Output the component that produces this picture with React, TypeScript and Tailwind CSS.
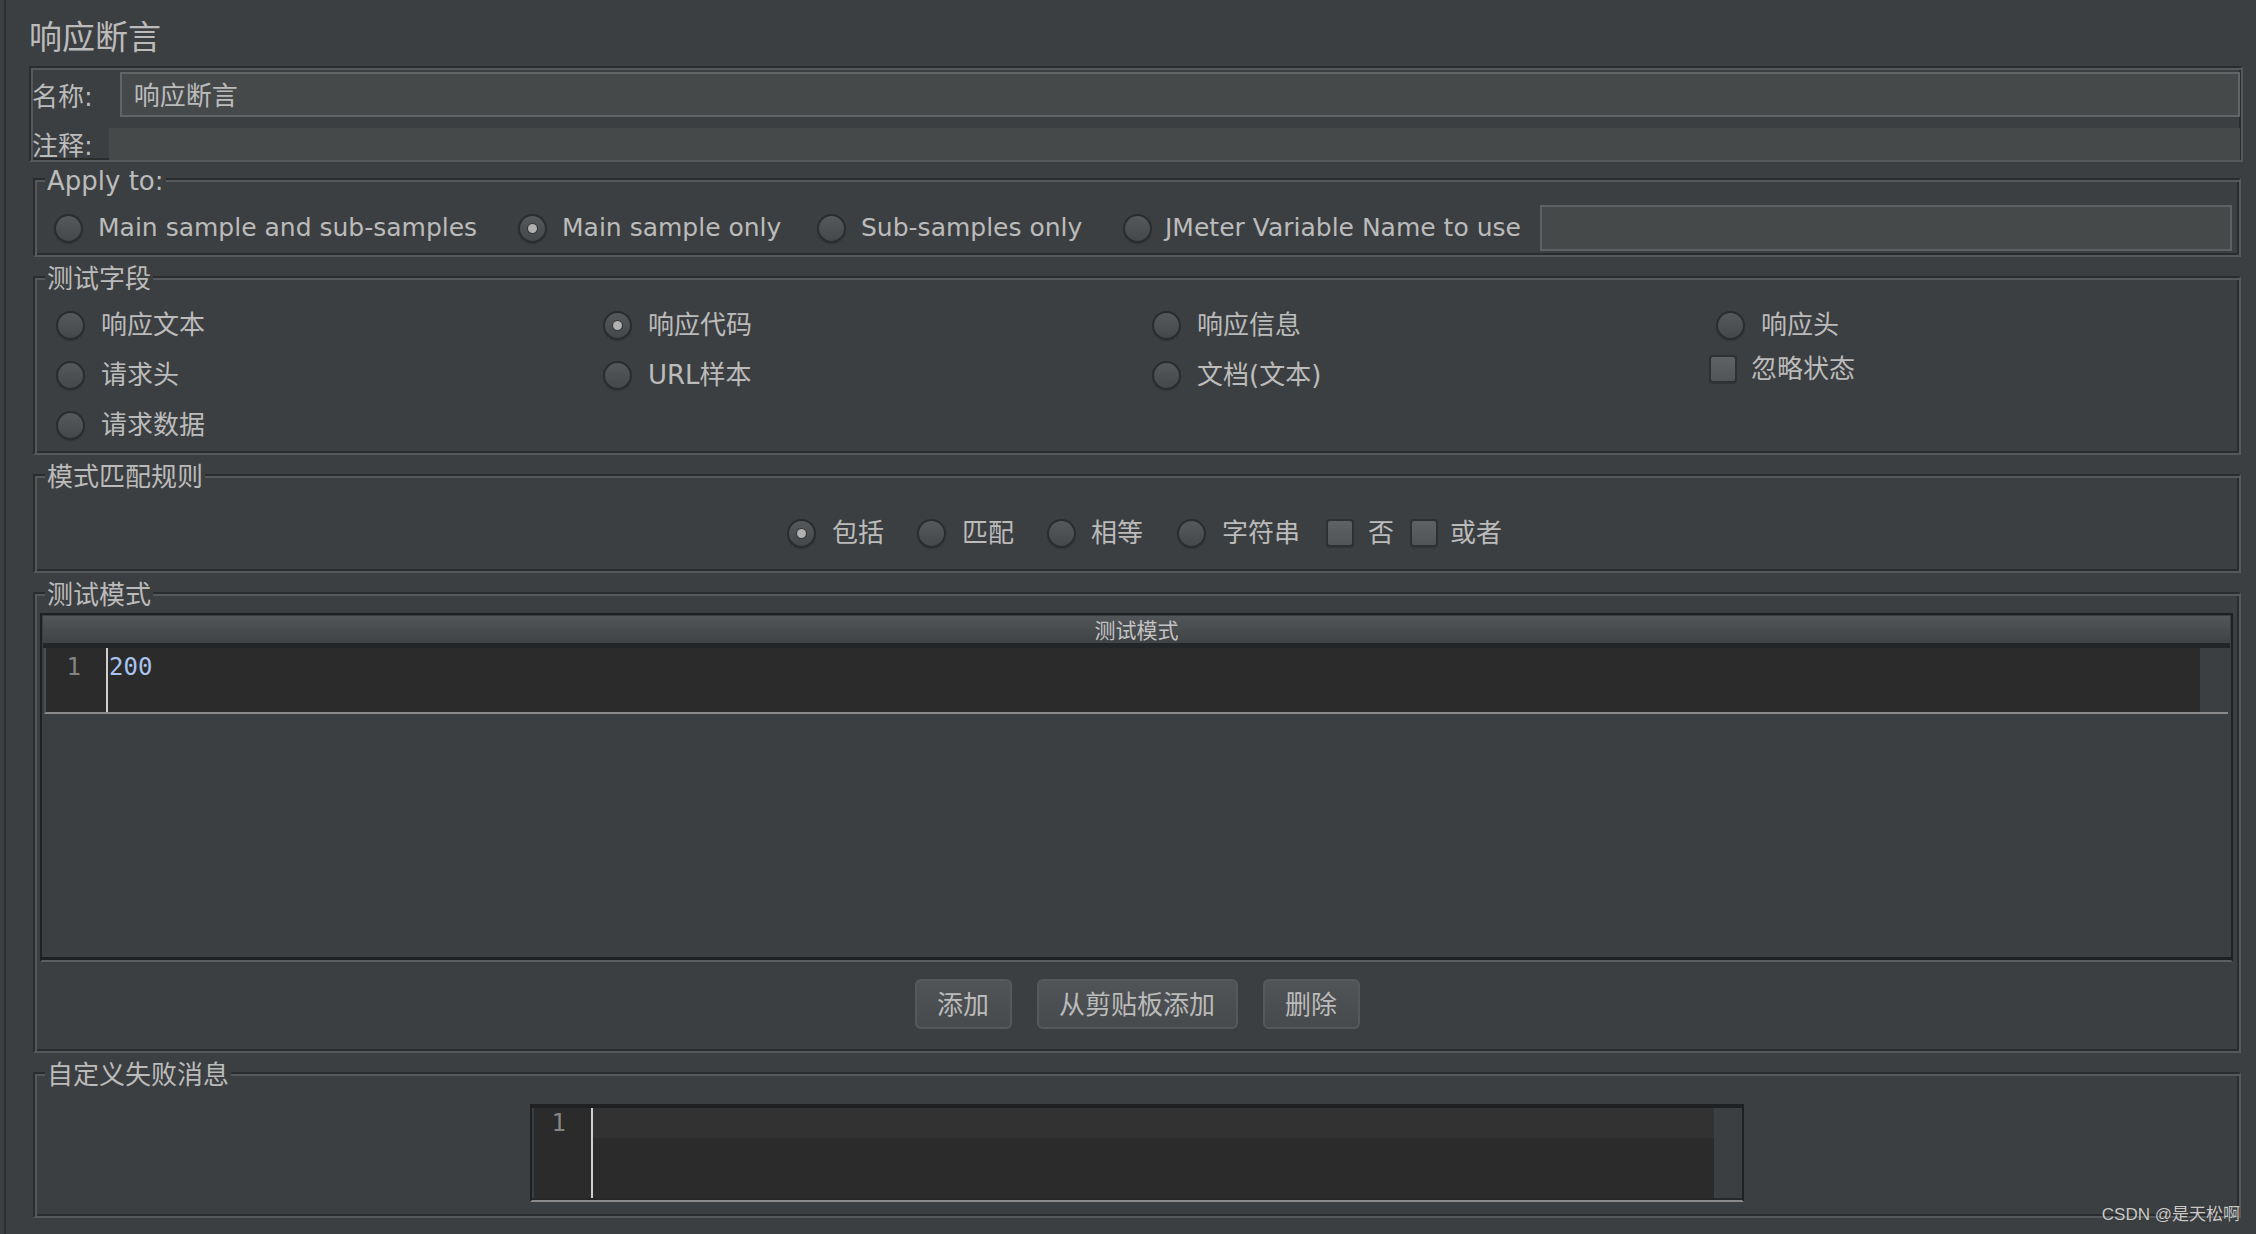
import { ReactNode } from 'react';

const etched =
  'border-2 border-t-[#2a2c2e] border-l-[#2a2c2e] border-r-[#55595b] border-b-[#55595b] shadow-[inset_2px_2px_0_#55595b,inset_-2px_-2px_0_#2a2c2e]';

const Radio = ({ checked }: { checked?: boolean }) => (
  <span className="flex h-[29px] w-[29px] shrink-0 items-center justify-center rounded-full border-2 border-[#2a2c2e] bg-linear-to-b from-[#56595c] to-[#45484a] shadow-[0_1px_1px_#323436]">
    {checked && (
      <span className="h-[9px] w-[9px] rounded-full bg-[#b0b0b0] shadow-[0_0_0_1px_#333537]" />
    )}
  </span>
);

const Check = () => (
  <span className="h-[28px] w-[28px] shrink-0 rounded-[4px] border-2 border-[#2e3032] bg-linear-to-b from-[#5f6264] to-[#525557] shadow-[0_1px_1px_#323436]" />
);

const Group = ({
  title,
  className,
  children,
}: {
  title: string;
  className?: string;
  children: ReactNode;
}) => (
  <fieldset className={`ml-[4px] mr-[2px] ${etched} ${className ?? ''}`}>
    <legend className="ml-[10px] bg-[#3c3f41] px-[2px] pt-[5px] text-[26px] leading-[25px]">
      {title}
    </legend>
    {children}
  </fieldset>
);

const Opt = ({ label, checked }: { label: string; checked?: boolean }) => (
  <div className="flex h-[50px] items-center gap-[16px]">
    <Radio checked={checked} />
    <span className="text-[26px]">{label}</span>
  </div>
);

const Button = ({ label, w }: { label: string; w: string }) => (
  <button
    className={`flex h-[50px] ${w} items-center justify-center rounded-[6px] border-2 border-[#55595b] bg-linear-to-b from-[#505456] to-[#474a4c] pt-[2px] text-[26px] text-[#bbbbbb]`}
  >
    {label}
  </button>
);

export default function App() {
  return (
    <div className="relative min-h-screen bg-[#3c3f41] pl-[4px] font-['DejaVu_Sans','Noto_Sans_CJK_SC',sans-serif] text-[25px] text-[#bbbbbb]">
      <div className="min-h-screen border-l-2 border-[#2b2d2f] pl-[23px] pr-[13px] pt-[14px]">
        <div className="pt-[3px] text-[33px] leading-[41px]">响应断言</div>

        {/* name / comment */}
        <div className={`mt-[8px] px-[1px] ${etched}`}>
          <div className="mt-[4px] flex h-[45px] items-center">
            <span className="pt-[5px] text-[26px]">名称:</span>
            <div className="ml-[27px] flex h-[45px] flex-1 items-center border-2 border-[#626567] bg-[#45494a] pl-[12px] pt-[3px] text-[26px]">
              响应断言
            </div>
          </div>
          <div className="mt-[11px] flex h-[32px] items-center">
            <span className="pt-[4px] text-[26px]">注释:</span>
            <div className="ml-[16px] h-[32px] flex-1 bg-[#45494a]" />
          </div>
        </div>

        <Group title="Apply to:" className="mt-[2px]">
          <div className="mb-[4px] mt-[11px] flex h-[46px] items-center pl-[19px] pr-[7px]">
            <div className="flex w-[464px] items-center gap-[15px]">
              <Radio />
              <span>Main sample and sub-samples</span>
            </div>
            <div className="flex w-[299px] items-center gap-[15px]">
              <Radio checked />
              <span>Main sample only</span>
            </div>
            <div className="flex w-[306px] items-center gap-[15px]">
              <Radio />
              <span>Sub-samples only</span>
            </div>
            <div className="flex w-[417px] items-center gap-[13px]">
              <Radio />
              <span>JMeter Variable Name to use</span>
            </div>
            <div className="h-[46px] flex-1 border-2 border-[#5e6163] bg-[#45494a]" />
          </div>
        </Group>

        <Group title="测试字段" className="mt-[5px]">
          <div className="mb-[3px] mt-[8px] grid grid-cols-[547px_549px_564px_1fr] pl-[21px]">
            <Opt label="响应文本" />
            <Opt label="响应代码" checked />
            <Opt label="响应信息" />
            <Opt label="响应头" />
            <Opt label="请求头" />
            <Opt label="URL样本" />
            <Opt label="文档(文本)" />
            <div className="-ml-[7px] flex h-[50px] items-center gap-[14px] pb-[12px]">
              <Check />
              <span className="text-[26px]">忽略状态</span>
            </div>
            <Opt label="请求数据" />
          </div>
        </Group>

        <Group title="模式匹配规则" className="mt-[5px]">
          <div className="mb-[18px] mt-[23px] flex h-[40px] items-center justify-center pl-[15px] text-[26px]">
            <Radio checked />
            <span className="ml-[16px]">包括</span>
            <span className="ml-[33px]">
              <Radio />
            </span>
            <span className="ml-[16px]">匹配</span>
            <span className="ml-[33px]">
              <Radio />
            </span>
            <span className="ml-[15px]">相等</span>
            <span className="ml-[34px]">
              <Radio />
            </span>
            <span className="ml-[16px]">字符串</span>
            <span className="ml-[26px] flex">
              <Check />
            </span>
            <span className="ml-[14px]">否</span>
            <span className="ml-[16px] flex">
              <Check />
            </span>
            <span className="ml-[12px]">或者</span>
          </div>
        </Group>

        <Group title="测试模式" className="mt-[5px]">
          <div className="ml-[5px] mr-[6px] mt-[5px] border-2 border-[#1f2022] border-b-[#5a5e60] px-[1px] pt-[1px]">
            <div className="flex h-[27px] items-center justify-center bg-linear-to-b from-[#525659] to-[#404346] pt-[4px] text-[21px] leading-none text-[#c4c4c4]">
              测试模式
            </div>
            <div className="h-[5px] bg-[#232527]" />
            <div className="ml-[1px] mr-[2px] flex h-[66px] border-b-2 border-l-2 border-b-[#8a8a8a] border-l-[#4b4e51] font-['DejaVu_Sans_Mono',monospace] text-[24px] leading-[30px]">
              <div className="w-[60px] bg-[#2b2b2b] pr-[25px] pt-[4px] text-right text-[#858585]">
                1
              </div>
              <div className="w-[2px] bg-[#cfcfcf]" />
              <div className="flex-1 bg-[#2b2b2b] pl-[1px] pt-[4px] text-[#a9c3f0]">200</div>
              <div className="w-[28px] bg-[#3c3f41]" />
            </div>
            <div className="h-[243px]" />
            <div className="-mx-[1px] h-[3px] bg-[#1f2022]" />
          </div>
          <div className="mb-[22px] mt-[17px] flex justify-center gap-[25px]">
            <Button label="添加" w="w-[97px]" />
            <Button label="从剪贴板添加" w="w-[201px]" />
            <Button label="删除" w="w-[97px]" />
          </div>
        </Group>

        <Group title="自定义失败消息" className="mt-[5px]">
          <div className="mx-auto mb-[14px] mt-[16px] flex h-[98px] w-[1214px] flex-col border-2 border-t-4 border-[#1f2022] border-b-[#8a8a8a]">
            <div className="flex flex-1 font-['DejaVu_Sans_Mono',monospace] text-[24px] leading-[30px]">
              <div className="w-[2px] bg-[#3b3e40]" />
              <div className="w-[57px] bg-[#2b2b2b] pr-[25px] text-right text-[#858585]">1</div>
              <div className="w-[2px] bg-[#cfcfcf]" />
              <div className="flex flex-1 flex-col bg-[#2b2b2b]">
                <div className="h-[30px] bg-[#323232]" />
              </div>
              <div className="w-[28px] bg-[#3c3f41]" />
            </div>
            <div className="h-[2px] bg-[#262728]" />
          </div>
        </Group>
      </div>

      <div className="absolute bottom-[9px] right-[16px] font-['Liberation_Sans','Noto_Sans_CJK_SC',sans-serif] text-[17px] leading-[20px] text-[#cacaca] [text-shadow:0_0_1px_#2a2a2a]">
        CSDN @是天松啊
      </div>
    </div>
  );
}
